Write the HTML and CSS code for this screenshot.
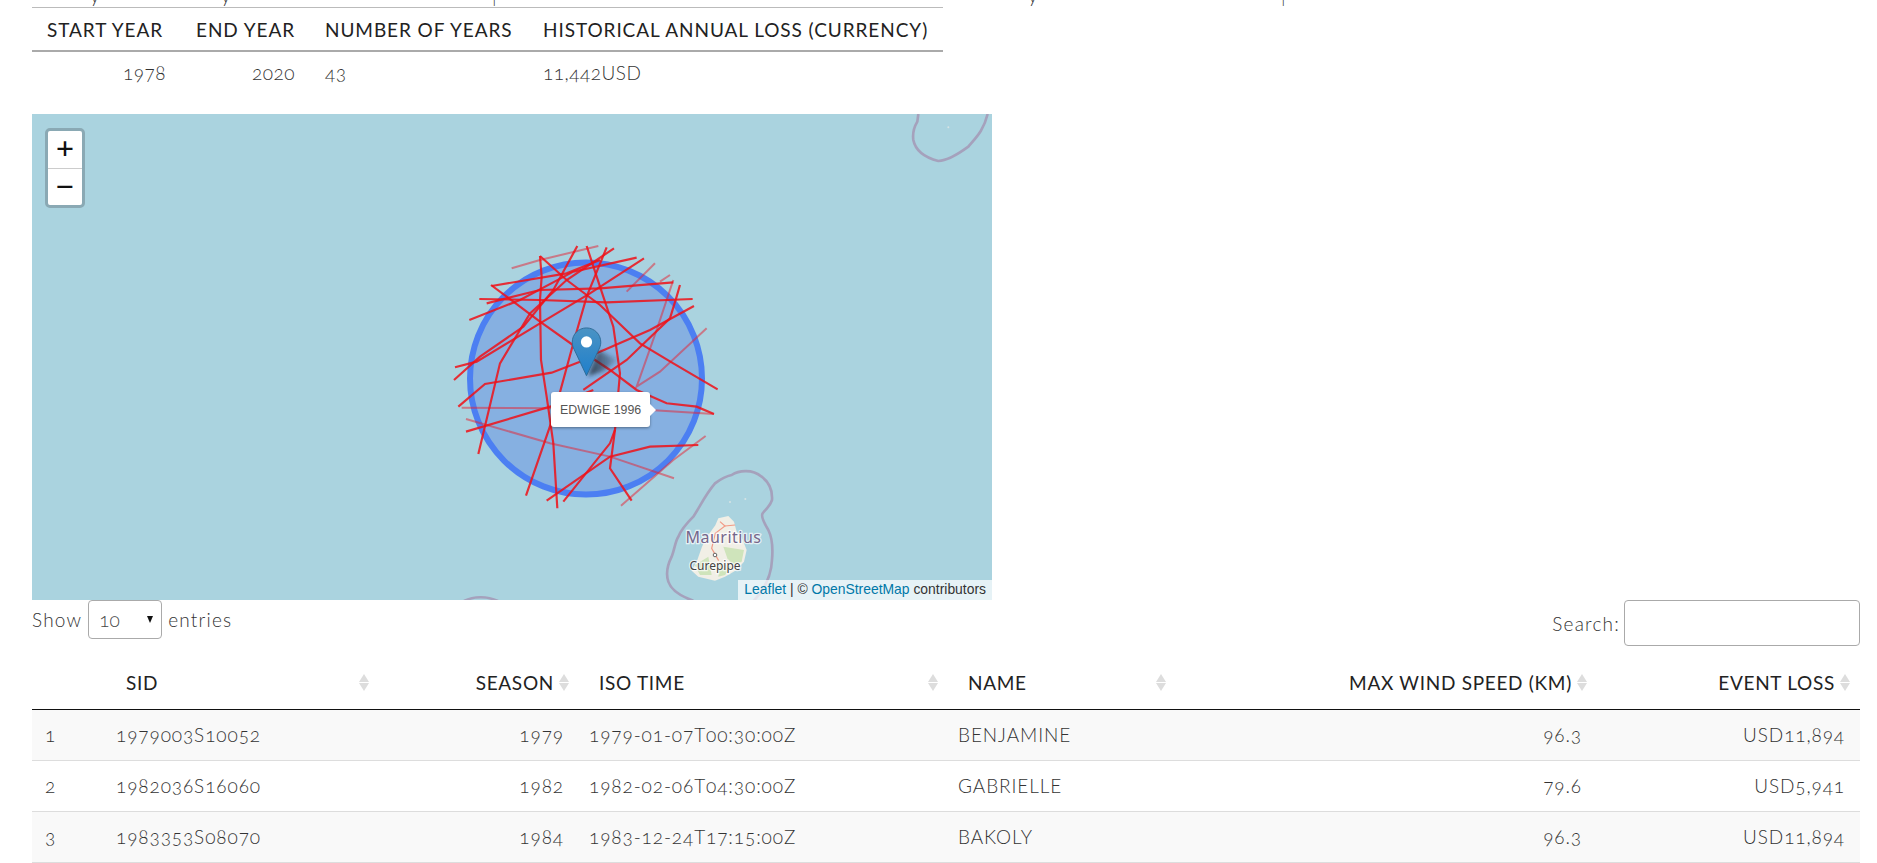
FILE: index.html
```html
<!DOCTYPE html>
<html lang="en">
<head>
	<meta charset="UTF-8">
	<title>Event set</title>
	<link rel="stylesheet" href="styles.css">
</head>
<body>
<div id="wrapper">
	<div class="cut-text">
		<span>y</span><span>y</span><span>|</span><span>y</span><span>|</span>
	</div>

	<table class="summary">
		<colgroup>
			<col class="s-start"><col class="s-end"><col class="s-num"><col class="s-loss">
		</colgroup>
		<thead>
			<tr>
				<th>START YEAR</th>
				<th>END YEAR</th>
				<th>NUMBER OF YEARS</th>
				<th>HISTORICAL ANNUAL LOSS (CURRENCY)</th>
			</tr>
		</thead>
		<tbody>
			<tr>
				<td class="right">1978</td>
				<td class="right">2020</td>
				<td>43</td>
				<td>11,442USD</td>
			</tr>
		</tbody>
	</table>

	<div class="map">
		<svg class="map-layer" viewBox="0 0 960 486" width="960" height="486">
			<defs>
				<linearGradient id="pinFill" x1="0" y1="0" x2="0" y2="1">
					<stop offset="0" stop-color="#4a93c4"/>
					<stop offset="1" stop-color="#1f7fcb"/>
				</linearGradient>
				<linearGradient id="shadowFill" x1="0" y1="0" x2="1" y2="0">
					<stop offset="0" stop-color="#1d2a36" stop-opacity=".85"/>
					<stop offset="1" stop-color="#1d2a36" stop-opacity=".15"/>
				</linearGradient>
				<filter id="soft"><feGaussianBlur stdDeviation="2"/></filter>
				<filter id="blurLand"><feGaussianBlur stdDeviation="1.6"/></filter>
			</defs>

			<!-- reef lines -->
			<g transform="translate(608,336) scale(.3333)">
				<path class="reef" d="M160 452C125 440 95 425 85 395C75 365 85 340 95 320C105 295 105 275 115 260C125 235 145 215 160 200C180 170 195 135 225 100C245 85 260 78 275 75C295 62 335 55 365 80C385 95 398 120 396 150C390 170 375 180 368 190C362 198 370 215 385 240C395 260 400 285 396 330C395 360 385 395 360 430L342 452"/>
				<g filter="url(#blurLand)">
					<path class="land" d="M235 205L265 198L282 215L290 245L305 262L320 300L312 335L290 360L255 380L225 392L175 380L155 362L172 330L186 290L200 262L226 226Z"/>
					<path class="land-green" d="M250 290L312 300L305 335L280 345L262 325Z"/>
					<path class="land-green" d="M165 345L205 320L215 375L180 375Z"/>
					<path class="land-green" d="M240 340L275 350L255 375L235 380Z"/>
				</g>
				<path class="road" d="M240 215L255 228L226 250L215 295L236 332"/>
				<path class="road" d="M255 228L285 225"/>
				<circle class="isle" cx="270" cy="156" r="3"/>
				<circle class="isle" cx="316" cy="147" r="3"/>
			</g>
			<g transform="translate(848,-24) scale(.3333)">
				<path class="reef" d="M115 72L112 95C100 115 98 135 100 150C105 175 125 200 175 213C205 212 235 192 265 170C285 145 310 125 323 72"/>
				<circle class="isle" cx="205" cy="112" r="3"/>
			</g>
			<path class="reef-thin" d="M432 487C442 482 455 482 466 487"/>

			<circle class="town" cx="683" cy="441" r="1.8"/>
			<text class="place place-big" x="691.5" y="429">Mauritius</text>
			<text class="place place-small" x="683" y="456">Curepipe</text>

			<circle class="zone" cx="554" cy="264.5" r="116"/>

			<!-- tracks, same scale as a 3x crop of the map -->
			<g transform="translate(408,116) scale(.3333)">
				<polyline class="track-faint" points="215,115 300,90 475,48"/>
				<polyline class="track-faint" points="660,155 690,135"/>
				<polyline class="track-faint" points="560,185 645,100"/>
				<polyline class="track-faint" points="700,150 650,300 590,470 660,425 800,295"/>
				<polyline class="track-faint" points="78,567 330,640 510,680 702,745"/>
				<polyline class="track-faint" points="65,533 330,535 630,540 822,552"/>
				<polyline class="track-faint" points="543,827 700,690 797,618"/>
				<polyline class="track" points="300,78 305,140 300,210 303,390 320,500 340,640 352,835"/>
				<polyline class="track" points="153,165 300,275 420,360 510,420 590,480 680,520 770,530 822,552"/>
				<polyline class="track" points="300,78 380,150 480,225 600,340 700,400 833,478"/>
				<polyline class="track" points="88,270 240,210 400,125 590,83"/>
				<polyline class="track" points="118,207 300,210 500,217 758,207"/>
				<polyline class="track" points="140,220 300,180 480,175 700,157"/>
				<polyline class="track" points="155,168 380,130 480,90"/>
				<polyline class="track" points="45,412 110,395 300,280 450,190 612,85"/>
				<polyline class="track" points="42,450 120,380 250,290 340,180 412,48"/>
				<polyline class="track" points="115,672 180,400 270,250 380,150 522,55"/>
				<polyline class="track" points="55,530 135,462 335,428 420,395 480,365 630,300 762,228"/>
				<polyline class="track" points="440,48 480,170 520,290 540,430 525,600 510,715 575,812"/>
				<polyline class="track" points="500,52 440,200 400,340 340,560 258,797"/>
				<polyline class="track" points="78,605 330,530 460,480"/>
				<polyline class="track" points="320,812 510,680 630,650 775,645"/>
				<polyline class="track" points="370,815 510,640 525,600"/>
				<polyline class="track" points="720,165 710,200 690,265 560,390 430,480"/>
			</g>

			<!-- marker -->
			<path class="pin-shadow" d="M556 262L566 236L586 246L572 257Z" filter="url(#soft)"/>
			<g transform="translate(539.5,213.2) scale(1.2,1.2)">
				<path class="pin" d="M12.5 .6C5.8 .6 .6 6 .6 12.5c0 2.3 .7 4.4 1.7 6.2L12.5 40.4 22.7 18.7c1-1.8 1.7-3.9 1.7-6.2C24.4 6 19.2 .6 12.5 .6z"/>
				<circle class="pin-dot" cx="12.5" cy="12.3" r="4.7"/>
			</g>
		</svg>

		<div class="zoom-box">
			<a class="zoom-in">+</a>
			<a class="zoom-out">&minus;</a>
		</div>

		<div class="tooltip">EDWIGE 1996</div>

		<div class="attribution"><a>Leaflet</a> | &copy; <a>OpenStreetMap</a> contributors</div>
	</div>

	<div class="table-tools">
		<label class="length">Show
			<span class="select-box"><select><option>10</option><option>25</option><option>50</option></select></span>
			entries</label>
		<label class="search">Search:<input type="search"></label>
	</div>

	<table class="events">
		<colgroup>
			<col class="c-num"><col class="c-sid"><col class="c-season"><col class="c-iso"><col class="c-name"><col class="c-wind"><col class="c-loss">
		</colgroup>
		<thead>
			<tr>
				<th></th>
				<th class="sortable">SID<i class="sort"></i></th>
				<th class="sortable right">SEASON<i class="sort"></i></th>
				<th class="sortable">ISO TIME<i class="sort"></i></th>
				<th class="sortable">NAME<i class="sort"></i></th>
				<th class="sortable right">MAX WIND SPEED (KM)<i class="sort"></i></th>
				<th class="sortable right">EVENT LOSS<i class="sort"></i></th>
			</tr>
		</thead>
		<tbody>
			<tr class="odd">
				<td class="num">1</td>
				<td>1979003S10052</td>
				<td class="right">1979</td>
				<td>1979-01-07T00:30:00Z</td>
				<td>BENJAMINE</td>
				<td class="right">96.3</td>
				<td class="right">USD11,894</td>
			</tr>
			<tr>
				<td class="num">2</td>
				<td>1982036S16060</td>
				<td class="right">1982</td>
				<td>1982-02-06T04:30:00Z</td>
				<td>GABRIELLE</td>
				<td class="right">79.6</td>
				<td class="right">USD5,941</td>
			</tr>
			<tr class="odd">
				<td class="num">3</td>
				<td>1983353S08070</td>
				<td class="right">1984</td>
				<td>1983-12-24T17:15:00Z</td>
				<td>BAKOLY</td>
				<td class="right">96.3</td>
				<td class="right">USD11,894</td>
			</tr>
		</tbody>
	</table>
</div>
</body>
</html>
```

FILE: styles.css
```css
html,body{
    margin: 0;
    padding: 0;
    background: #fff;
}
body{
    height: 863px;
    overflow: hidden;
    font-family: Lato, "Open Sans", "Liberation Sans", sans-serif;
    font-size: 19px;
    font-weight: 300;
    font-variant-numeric: oldstyle-nums;
    color: #333;
}
i{
    font-style: normal;
}
table{
    border-collapse: collapse;
    border-spacing: 0;
    table-layout: fixed;
}
th{
    font-weight: 400;
    color: #222;
    text-align: left;
    white-space: nowrap;
}
.right{
    text-align: right;
}
#wrapper{
    padding: 0 17px 0 32px;
}

/* line of text above, scrolled out of view */
.cut-text{
    display: grid;
    grid-template-columns: 131px 271px 536px 253px 1fr;
    height: 7px;
    padding-left: 58px;
    overflow: hidden;
    line-height: 18px;
}
.cut-text span{
    display: block;
    margin-top: -13px;
}

/* summary table */
.summary{
    width: 911px;
    border-top: 1px solid #bbb;
}
.s-start{
    width: 149px;
}
.s-end{
    width: 129px;
}
.s-num{
    width: 218px;
}
.s-loss{
    width: 415px;
}
.summary th{
    height: 42px;
    padding: 0 15px;
    border-bottom: 2px solid #aaa;
    letter-spacing: .92px;
}
.summary td{
    height: 41px;
    padding: 0 15px 2px;
    letter-spacing: .5px;
}

/* map */
.map{
    position: relative;
    width: 960px;
    height: 486px;
    margin-top: 19px;
    overflow: hidden;
    background: #aad3df;
}
.map-layer{
    display: block;
}
.reef{
    fill: none;
    stroke: #a5a1bc;
    stroke-width: 8;
}
.reef-thin{
    fill: none;
    stroke: #a5a1bc;
    stroke-width: 2.6;
}
.land{
    fill: #f1efe6;
}
.land-green{
    fill: #cfe4bb;
}
.road{
    fill: none;
    stroke: #f29a85;
    stroke-width: 3.5;
}
.isle{
    fill: #d6e3e4;
}
.place{
    font-family: "Noto Sans", "DejaVu Sans", sans-serif;
    text-anchor: middle;
    paint-order: stroke;
    stroke: rgba(255,255,255,.7);
    stroke-width: 2.5px;
    font-weight: 400;
    font-variant-numeric: normal;
}
.place-big{
    font-size: 16px;
    letter-spacing: .5px;
    fill: #75668a;
}
.place-small{
    font-size: 12px;
    fill: #444;
}
.town{
    fill: #fff;
    stroke: #666;
    stroke-width: 1;
}
.zone{
    fill: #86b0e1;
    stroke: #4c7ff2;
    stroke-width: 6;
}
.track{
    fill: none;
    stroke: #f01018;
    stroke-width: 6.5;
    stroke-opacity: .85;
}
.track-faint{
    fill: none;
    stroke: #e82030;
    stroke-width: 6;
    stroke-opacity: .5;
}
.pin{
    fill: url(#pinFill);
    stroke: #2e6c97;
    stroke-width: .8;
}
.pin-dot{
    fill: #fff;
}
.pin-shadow{
    fill: url(#shadowFill);
}
.zoom-box{
    position: absolute;
    top: 14px;
    left: 13px;
    width: 34px;
    border: 3px solid #8aa9b4;
    border-radius: 5px;
    background: #fff;
}
.zoom-box a{
    display: block;
    height: 36px;
    line-height: 35px;
    text-align: center;
    font-family: "DejaVu Sans Mono", "Liberation Mono", monospace;
    font-size: 29px;
    font-weight: 400;
    color: #111;
}
.zoom-box a.zoom-in{
    height: 37px;
    border-bottom: 1px solid #ccc;
}
.tooltip{
    position: absolute;
    top: 278px;
    left: 519px;
    padding: 0 9px;
    height: 35px;
    line-height: 36px;
    background: #fff;
    border-radius: 3px;
    box-shadow: 0 1px 3px rgba(0,0,0,.4);
    font-family: "Liberation Sans", Arial, sans-serif;
    font-size: 12.4px;
    font-weight: 400;
    font-variant-numeric: normal;
    color: #555;
    white-space: nowrap;
}
.tooltip::after{
    content: "";
    position: absolute;
    top: 50%;
    left: 100%;
    margin-top: -6px;
    border: 6px solid transparent;
    border-left-color: #fff;
}
.attribution{
    position: absolute;
    right: 0;
    bottom: 0;
    height: 20px;
    padding: 0 6px;
    line-height: 19px;
    background: rgba(255,255,255,.7);
    font-family: "Liberation Sans", Arial, sans-serif;
    font-size: 13.9px;
    font-weight: 400;
    font-variant-numeric: normal;
    color: #333;
}
.attribution a{
    color: #0078a8;
}

/* datatable controls */
.table-tools{
    display: flex;
    justify-content: space-between;
    align-items: flex-start;
}
.length{
    display: flex;
    align-items: center;
    gap: 6px;
    height: 38px;
    letter-spacing: 1.2px;
}
.select-box{
    position: relative;
    display: block;
    width: 74px;
    height: 39px;
}
.select-box::after{
    content: "";
    position: absolute;
    top: 16px;
    right: 9px;
    border: 3.5px solid transparent;
    border-bottom-width: 0;
    border-top: 7px solid #111;
}
.length select{
    appearance: none;
    box-sizing: border-box;
    width: 100%;
    height: 39px;
    padding: 0 0 0 10px;
    border: 1px solid #aaa;
    border-radius: 4px;
    background: #fff;
    font: inherit;
    font-variant-numeric: oldstyle-nums;
    color: #444;
}
.search{
    display: flex;
    align-items: center;
    gap: 4px;
    height: 46px;
    letter-spacing: 1.2px;
}
.search input{
    box-sizing: border-box;
    width: 236px;
    height: 46px;
    border: 1px solid #aaa;
    border-radius: 4px;
    background: #fff;
    outline: none;
}

/* datatable */
.events{
    width: 1828px;
    margin-top: 10px;
}
.c-num{
    width: 74px;
}
.c-sid{
    width: 273px;
}
.c-season{
    width: 200px;
}
.c-iso{
    width: 369px;
}
.c-name{
    width: 228px;
}
.c-wind{
    width: 421px;
}
.c-loss{
    width: 263px;
}
.events th{
    position: relative;
    height: 53px;
    padding: 0 26px 0 20px;
    border-bottom: 1px solid #111;
    letter-spacing: .7px;
}
.events th.right{
    padding-right: 25px;
}
.events td{
    height: 48px;
    padding: 0 15px 2px 10px;
    border-bottom: 1px solid #ddd;
    letter-spacing: .9px;
}
.events td.num{
    padding-left: 13px;
}
.events tr.odd td{
    background: #f9f9f9;
}
.sort{
    position: absolute;
    top: 50%;
    right: 10px;
    width: 0;
    height: 0;
    margin-top: -9px;
    border: 5px solid transparent;
    border-top-width: 0;
    border-bottom: 8px solid #ddd;
}
.sort::after{
    content: "";
    position: absolute;
    top: 9px;
    left: -5px;
    border: 5px solid transparent;
    border-bottom-width: 0;
    border-top: 8px solid #ddd;
}
```
